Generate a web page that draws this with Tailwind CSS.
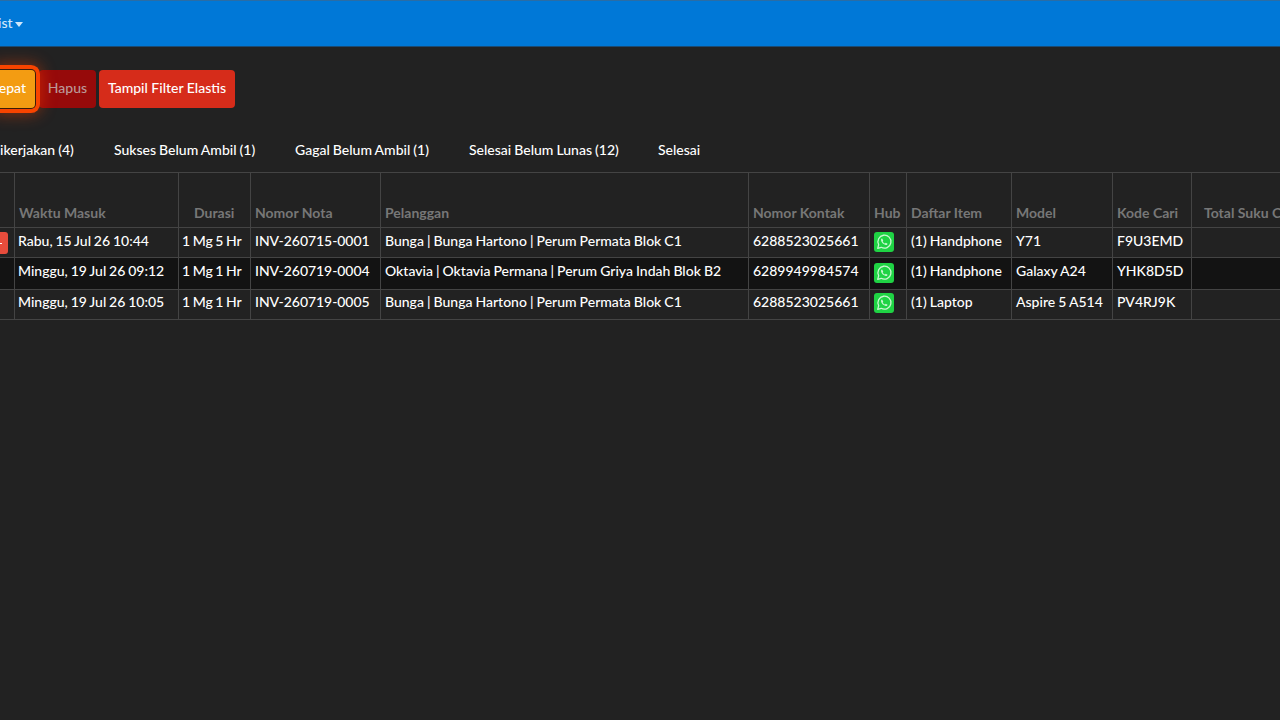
<!DOCTYPE html>
<html lang="id">
<head>
  <meta charset="UTF-8" />
  <meta name="viewport" content="width=device-width, initial-scale=1.0" />
  <title>Service List</title>
  <script src="https://cdn.jsdelivr.net/npm/@tailwindcss/browser@4"></script>
</head>

<body class="h-screen overflow-hidden bg-[#222] font-[Lato,sans-serif] text-[14px] leading-5 font-medium text-white">

  <!-- WhatsApp icon, used once per row -->
  <svg class="hidden">
    <symbol id="wa" viewBox="0 0 20 20">
      <rect width="20" height="20" rx="3" fill="#1fd344" />
      <path d="M3.700 16.300l1-3.600a6.500 6.500 0 1 1 2.500 2.600z" fill="none" stroke="#c9f8d0" stroke-width="1.300" stroke-linejoin="round" />
      <path d="M8.100 6.500c-.5 0-1.200.7-1.100 1.600.2 2.300 2.400 4.500 4.800 4.900.9.100 1.700-.6 1.700-1.300l-1.700-.9-.8.8c-1.100-.5-1.800-1.200-2.300-2.300l.6-.8z" fill="#c9f8d0" />
    </symbol>
  </svg>

  <nav class="flex h-[47px] items-center border-t border-b border-t-[#2a6da5] border-b-[#1a4a73] bg-[#0078d7] text-[#cfe7fb]">
    <span class="-ml-[2px] -mt-px whitespace-nowrap">ist</span>
    <span class="mt-[2px] ml-[2px] border-x-4 border-t-[5px] border-x-transparent border-t-[#cfe7fb]"></span>
  </nav>

  <div class="flex pt-[23px]">
    <button class="relative z-10 flex h-[38px] w-[35px] items-center justify-end rounded-r bg-[#f39c12] pr-[9px] pb-[2px] shadow-[0_0_0_1px_#3a1c0a,0_0_0_5px_#f84400,0_0_16px_6px_rgba(255,69,0,0.45)]">epat</button>
    <button class="ml-1 h-[38px] w-[57px] rounded bg-[#960a0a] pb-[2px] text-[#b99]">Hapus</button>
    <button class="ml-[3px] h-[38px] w-[136px] rounded bg-[#d62c1a] pb-[2px]">Tampil Filter Elastis</button>
  </div>

  <div class="mt-8 flex h-[32px] whitespace-nowrap [word-spacing:-0.5px]">
    <span class="w-[114px]">ikerjakan (4)</span>
    <span class="w-[181px]">Sukses Belum Ambil (1)</span>
    <span class="w-[174px]">Gagal Belum Ambil (1)</span>
    <span class="w-[189px]">Selesai Belum Lunas (12)</span>
    <span>Selesai</span>
  </div>

  <table class="w-[1281px] table-fixed border-separate border-spacing-0 border-t border-[#444] whitespace-nowrap [&_td]:border-r [&_td]:border-b [&_td]:border-[#444] [&_td]:px-1 [&_td]:pt-[3px] [&_td]:align-top [&_td]:[word-spacing:-0.5px] [&_th]:border-r [&_th]:border-b [&_th]:border-[#444] [&_th]:px-1 [&_th]:pb-1 [&_th]:text-left [&_th]:align-bottom">
    <colgroup>
      <col class="w-[15px]" />
      <col class="w-[164px]" />
      <col class="w-[72px]" />
      <col class="w-[130px]" />
      <col class="w-[368px]" />
      <col class="w-[121px]" />
      <col class="w-[37px]" />
      <col class="w-[105px]" />
      <col class="w-[101px]" />
      <col class="w-[79px]" />
      <col class="w-[89px]" />
    </colgroup>
    <thead>
      <tr class="h-[55px] text-[#777]">
        <th></th>
        <th>Waktu Masuk</th>
        <th><span class="ml-[11px]">Durasi</span></th>
        <th>Nomor Nota</th>
        <th>Pelanggan</th>
        <th>Nomor Kontak</th>
        <th>Hub</th>
        <th>Daftar Item</th>
        <th>Model</th>
        <th>Kode Cari</th>
        <th><span class="ml-2">Total Suku Cadang</span></th>
      </tr>
    </thead>
    <tbody>
      <tr class="h-[30px]">
        <td><span class="-ml-1 mt-px flex h-[22px] w-[8px] items-center overflow-hidden rounded-r-[3px] bg-[#e74c3c]"><span class="h-px w-[2px] bg-white"></span></span></td>
        <td><span class="-ml-px [word-spacing:-0.7px]">Rabu, 15 Jul 26 10:44</span></td>
        <td><span class="-ml-px [word-spacing:-1px]">1 Mg 5 Hr</span></td>
        <td class="tracking-[-0.06px]">INV-260715-0001</td>
        <td>Bunga | Bunga Hartono | Perum Permata Blok C1</td>
        <td>6288523025661</td>
        <td><svg class="mt-px size-5"><use href="#wa" /></svg></td>
        <td>(1) Handphone</td>
        <td>Y71</td>
        <td>F9U3EMD</td>
        <td></td>
      </tr>
      <tr class="h-[32px] bg-[#131313]">
        <td></td>
        <td><span class="-ml-px [word-spacing:-0.7px]">Minggu, 19 Jul 26 09:12</span></td>
        <td><span class="-ml-px [word-spacing:-1px]">1 Mg 1 Hr</span></td>
        <td class="tracking-[-0.06px]">INV-260719-0004</td>
        <td>Oktavia | Oktavia Permana | Perum Griya Indah Blok B2</td>
        <td>6289949984574</td>
        <td><svg class="mt-[2px] size-5"><use href="#wa" /></svg></td>
        <td>(1) Handphone</td>
        <td>Galaxy A24</td>
        <td>YHK8D5D</td>
        <td></td>
      </tr>
      <tr class="h-[30px] [&_td]:pt-[2px]!">
        <td></td>
        <td><span class="-ml-px [word-spacing:-0.7px]">Minggu, 19 Jul 26 10:05</span></td>
        <td><span class="-ml-px [word-spacing:-1px]">1 Mg 1 Hr</span></td>
        <td class="tracking-[-0.06px]">INV-260719-0005</td>
        <td>Bunga | Bunga Hartono | Perum Permata Blok C1</td>
        <td>6288523025661</td>
        <td><svg class="mt-px size-5"><use href="#wa" /></svg></td>
        <td>(1) Laptop</td>
        <td>Aspire 5 A514</td>
        <td>PV4RJ9K</td>
        <td></td>
      </tr>
    </tbody>
  </table>
</body>
</html>
